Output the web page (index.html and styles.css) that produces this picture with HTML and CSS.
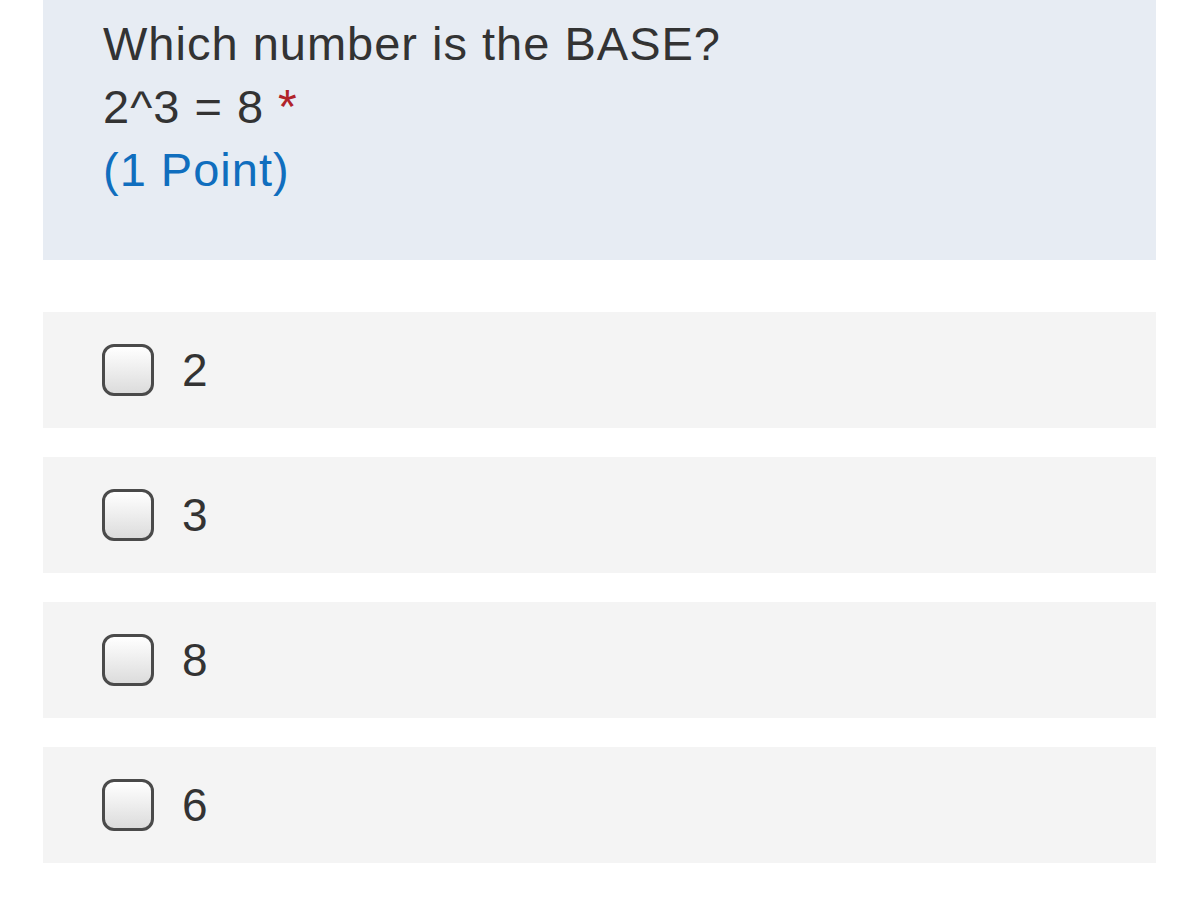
FILE: index.html
```html
<!DOCTYPE html>
<html>
<head>
<meta charset="utf-8">
<link rel="stylesheet" href="styles.css">
</head>
<body>
<div class="form">
  <div class="question">
    <div class="line">Which number is the BASE?</div>
    <div class="line">2^3 = 8 <span class="req">*</span></div>
    <div class="line points">(1 Point)</div>
  </div>
  <div class="options">
    <label class="option"><span class="box"></span><span class="label">2</span></label>
    <label class="option"><span class="box"></span><span class="label">3</span></label>
    <label class="option"><span class="box"></span><span class="label">8</span></label>
    <label class="option"><span class="box"></span><span class="label">6</span></label>
  </div>
</div>
</body>
</html>
```

FILE: styles.css
```css
html, body {
  margin: 0;
  padding: 0;
  background: #ffffff;
}
body {
  font-family: "Liberation Sans", Arial, sans-serif;
  color: #333333;
}
.form {
  margin-left: 43px;
  width: 1113px;
}
.question {
  background: #e7ecf3;
  box-sizing: border-box;
  height: 260px;
  padding: 12px 0 0 60px;
}
.line {
  font-size: 47px;
  line-height: 63px;
  letter-spacing: 1px;
  white-space: nowrap;
}
.req {
  color: #b1232a;
  font-size: 48px;
}
.points {
  color: #106ebe;
}
.options {
  margin-top: 52px;
  display: flex;
  flex-direction: column;
  gap: 29px;
}
.option {
  background: #f4f4f4;
  height: 116px;
  display: flex;
  align-items: center;
  padding-left: 59px;
  gap: 28px;
}
.box {
  box-sizing: border-box;
  width: 52px;
  height: 52px;
  border: 3px solid #4a4a4a;
  border-radius: 12px;
  background: linear-gradient(#ffffff, #dcdcdc);
}
.label {
  font-size: 46px;
  color: #333333;
}
```
